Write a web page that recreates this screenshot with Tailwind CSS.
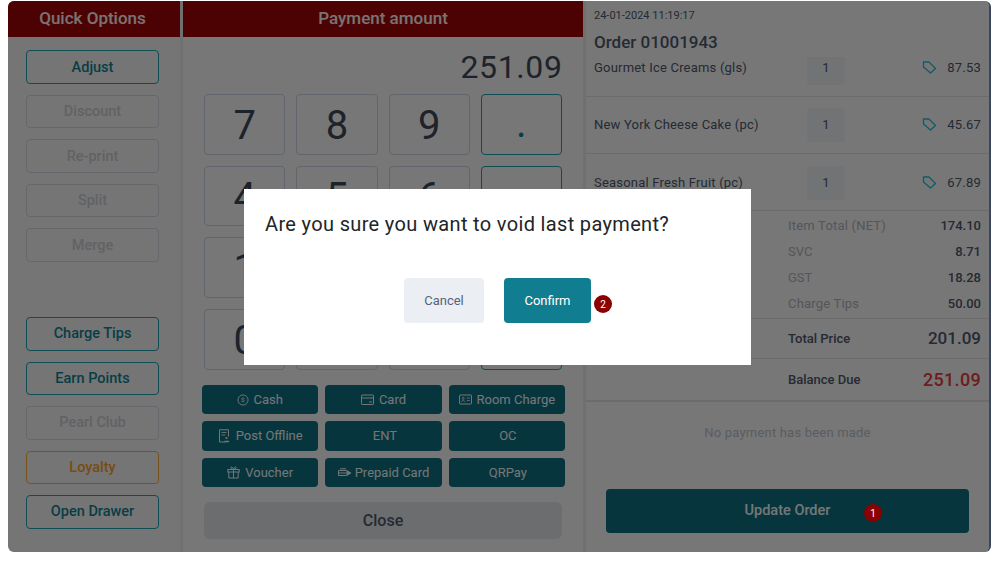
<!DOCTYPE html>
<html lang="en">
<head>
<meta charset="UTF-8" />
<title>Payment</title>
<script src="https://cdn.jsdelivr.net/npm/@tailwindcss/browser@4"></script>
</head>
<body class="bg-white [font-family:Roboto,sans-serif] w-[999px] h-[563px] overflow-hidden">
<div class="relative w-[999px] h-[563px] pt-px pl-2">
	<div class="relative flex w-[983px] h-[551px] overflow-hidden rounded-[6px] bg-[#eeeeee] border-r-2 border-[#3a4660]">
		<!-- quick options -->
		<div class="w-[172px] shrink-0 flex flex-col bg-[#ebebeb]">
			<div class="h-9 pr-[3px] bg-[#980505] text-white/90 font-medium text-[17px] flex items-center justify-center">Quick Options</div>
			<div class="flex flex-col gap-[11px] pt-[13.4px] pl-[18px] pr-[18px] w-[169px] text-[14.5px] font-medium">
				<button class="h-[33.5px] pt-px rounded border border-[#1d9aa8] text-[#0f7c8d]">Adjust</button>
				<button class="h-[33.5px] rounded border border-[#c8d0d8] text-[#c2c5ca]">Discount</button>
				<button class="h-[33.5px] pt-px rounded border border-[#c8d0d8] text-[#c2c5ca]">Re-print</button>
				<button class="h-[33.5px] rounded border border-[#c8d0d8] text-[#c2c5ca]">Split</button>
				<button class="h-[33.5px] pt-px rounded border border-[#c8d0d8] text-[#c2c5ca]">Merge</button>
				<div class="h-[33.5px]"></div>
				<button class="h-[33.5px] rounded border border-[#1d9aa8] text-[#0f7c8d]">Charge Tips</button>
				<button class="h-[33.5px] rounded border border-[#1d9aa8] text-[#0f7c8d]">Earn Points</button>
				<button class="h-[33.5px] rounded border border-[#c8d0d8] text-[#c2c5ca]">Pearl Club</button>
				<button class="h-[33.5px] rounded border border-[#f0a63c] text-[#ee9a26]">Loyalty</button>
				<button class="h-[33.5px] rounded border border-[#1d9aa8] text-[#0f7c8d]">Open Drawer</button>
			</div>
		</div>
		<div class="w-[3px] shrink-0 bg-[#e0e0e0]"></div>
		<!-- payment -->
		<div class="w-[400px] shrink-0 flex flex-col">
			<div class="h-9 bg-[#980505] text-white/90 font-medium text-[17px] flex items-center justify-center">Payment amount</div>
			<div class="h-[57px] pr-[20.5px] pt-[2px] flex items-center justify-end text-[32px] tracking-[0.6px] text-[#3d4757]">251.09</div>
			<div class="ml-[21px] w-[358px] grid grid-cols-4 gap-x-[11px] gap-y-[11px] text-[40px] text-[#3d4757]">
				<button class="h-[60.7px] pt-[3px] rounded border border-[#c0ccd8] leading-none">7</button>
				<button class="h-[60.7px] pt-[3px] rounded border border-[#c0ccd8] leading-none">8</button>
				<button class="h-[60.7px] pt-[3px] rounded border border-[#c0ccd8] leading-none">9</button>
				<button class="h-[60.7px] rounded border border-[#1d9aa8] text-[#0f7c8d] leading-none">.</button>
				<button class="h-[60.7px] pt-[3px] rounded border border-[#c0ccd8] leading-none">4</button>
				<button class="h-[60.7px] pt-[3px] rounded border border-[#c0ccd8] leading-none">5</button>
				<button class="h-[60.7px] pt-[3px] rounded border border-[#c0ccd8] leading-none">6</button>
				<button class="h-[60.7px] rounded border border-[#1d9aa8]"></button>
				<button class="h-[60.7px] pt-[3px] rounded border border-[#c0ccd8] leading-none">1</button>
				<button class="h-[60.7px] pt-[3px] rounded border border-[#c0ccd8] leading-none">2</button>
				<button class="h-[60.7px] pt-[3px] rounded border border-[#c0ccd8] leading-none">3</button>
				<button class="h-[60.7px] rounded border border-[#1d9aa8]"></button>
				<button class="h-[60.7px] pt-[3px] rounded border border-[#c0ccd8] leading-none">0</button>
				<button class="h-[60.7px] pt-[3px] rounded border border-[#c0ccd8] leading-none">00</button>
				<button class="h-[60.7px] pt-[3px] rounded border border-[#c0ccd8] leading-none">000</button>
				<button class="h-[60.7px] rounded border border-[#1d9aa8]"></button>
			</div>
			<div class="ml-[19px] mt-[15px] w-[363px] grid grid-cols-3 gap-x-[7px] gap-y-[7px] text-[13px] text-[#e8eef0]">
				<button class="h-[29.5px] rounded bg-[#0c6a7b] flex items-center justify-center gap-[4px]">
					<svg class="w-[12px] h-[12px]" viewBox="0 0 13 13" fill="none" stroke="currentColor"><circle cx="6.5" cy="6.5" r="5.5"/><path d="M8.2 5c-.4-.8-2.9-1-3.2.2-.3 1.3 3.2.9 3 2.400-.2 1.100-2.900 1-3.300 0" stroke-width=".9"/></svg>
					Cash
				</button>
				<button class="h-[29.5px] rounded bg-[#0c6a7b] flex items-center justify-center gap-[5px]">
					<svg class="w-[13px] h-[13px]" viewBox="0 0 13 13" fill="none" stroke="currentColor"><rect x=".5" y="2" width="12" height="9.5" rx=".6"/><path d="M.5 5h12M8 9h3"/></svg>
					Card
				</button>
				<button class="h-[29.5px] rounded bg-[#0c6a7b] flex items-center justify-center gap-[5px]">
					<svg class="w-[13px] h-[13px]" viewBox="0 0 13 13" fill="none" stroke="currentColor"><rect x=".5" y="2" width="12" height="9" rx=".6"/><circle cx="4.2" cy="5.4" r="1" stroke-width=".8"/><path d="M2.500 9c.2-2 3.200-2 3.400 0M7.800 5h3M7.800 7.500h3" stroke-width=".8"/></svg>
					Room Charge
				</button>
				<button class="h-[29.5px] rounded bg-[#0c6a7b] flex items-center justify-center gap-[5px]">
					<svg class="w-[13px] h-[14px]" viewBox="0 0 13 14" fill="none" stroke="currentColor"><path d="M7 13H1.500V.8h9V7.500"/><path d="M3.500 3.500h5M3.500 6h4" stroke-width=".9"/><circle cx="8.500" cy="9" r="1.100" fill="currentColor" stroke="none"/><path d="M6.500 12.500h4.500" stroke-width="1.500"/></svg>
					Post Offline
				</button>
				<button class="h-[29.5px] pl-[3px] rounded bg-[#0c6a7b]">ENT</button>
				<button class="h-[29.5px] pl-[2px] rounded bg-[#0c6a7b]">OC</button>
				<button class="h-[29.5px] rounded bg-[#0c6a7b] flex items-center justify-center gap-[5px]">
					<svg class="w-[13px] h-[13px]" viewBox="0 0 13 13" fill="none" stroke="currentColor"><rect x=".8" y="3.500" width="11.400" height="2.500"/><path d="M1.800 6v6h9.400V6M6.500 3.500V12M6.500 3.500C4 3.500 3 1 4.500 1s2 2.500 2 2.500 .5-2.500 2-2.500 .5 2.500-2 2.500z"/></svg>
					Voucher
				</button>
				<button class="h-[29.5px] rounded bg-[#0c6a7b] flex items-center justify-center gap-[3px]">
					<svg class="w-[14px] h-[13px]" viewBox="0 0 14 13" fill="none" stroke="currentColor"><path d="M.5 4.500h8l4.500 2.500-4.500 2.500h-8z"/><path d="M9 5l3 2-3 2z" fill="currentColor"/><path d="M.5 7h8M2 2.800h6"/></svg>
					Prepaid Card
				</button>
				<button class="h-[29.5px] pl-[2px] rounded bg-[#0c6a7b]">QRPay</button>
			</div>
			<button class="ml-[21px] mt-[14.5px] w-[358px] h-[37px] pt-px rounded-[6px] bg-[#d8dadd] text-[#4a5568] font-medium text-[16px]">Close</button>
		</div>
		<div class="w-[3px] shrink-0 bg-[#e0e0e0]"></div>
		<!-- order -->
		<div class="flex-1 flex flex-col min-w-0">
			<div class="pl-2 pt-[8px] text-[11px] leading-[13px] text-[#4a5568]">24-01-2024 11:19:17</div>
			<div class="pl-2 mt-[8px] h-[27px] text-[17px] leading-[25px] font-medium text-[#4a5568]">Order 01001943</div>
			<div class="h-[153px] overflow-hidden">
				<div class="-mt-[17.5px] text-[13px] tracking-[0.2px] text-[#4a5568]">
					<div class="h-[57px] border-b border-[#d8d8d8] flex items-center pl-2 pr-[8px]">
						<span class="w-[213px]">Gourmet Ice Creams (gls)</span>
						<span class="w-[38px] h-[34px] rounded bg-[#e4e6ea] flex items-center justify-center">1</span>
						<svg class="ml-[77px] w-[15px] h-[15px] text-[#20b8cc]" viewBox="0 0 15 15" fill="none" stroke="currentColor" stroke-width="1.300"><path d="M1.500 2h5.500l6.500 6.500-5 4.500L1.500 7z" stroke-linejoin="round"/></svg>
						<span class="ml-auto">87.53</span>
					</div>
					<div class="h-[57.500px] border-b border-[#d8d8d8] flex items-center pl-2 pr-[8px]">
						<span class="w-[213px]">New York Cheese Cake (pc)</span>
						<span class="w-[38px] h-[34px] rounded bg-[#e4e6ea] flex items-center justify-center">1</span>
						<svg class="ml-[77px] w-[15px] h-[15px] text-[#20b8cc]" viewBox="0 0 15 15" fill="none" stroke="currentColor" stroke-width="1.300"><path d="M1.500 2h5.500l6.500 6.500-5 4.500L1.500 7z" stroke-linejoin="round"/></svg>
						<span class="ml-auto">45.67</span>
					</div>
					<div class="h-[57.500px] flex items-center pl-2 pr-[8px]">
						<span class="w-[213px]">Seasonal Fresh Fruit (pc)</span>
						<span class="w-[38px] h-[34px] rounded bg-[#e4e6ea] flex items-center justify-center">1</span>
						<svg class="ml-[77px] w-[15px] h-[15px] text-[#20b8cc]" viewBox="0 0 15 15" fill="none" stroke="currentColor" stroke-width="1.300"><path d="M1.500 2h5.500l6.500 6.500-5 4.500L1.500 7z" stroke-linejoin="round"/></svg>
						<span class="ml-auto">67.89</span>
					</div>
				</div>
			</div>
			<div class="pl-[202px] pr-[8px] h-[109px] pt-[2px] border-y border-[#d8d8d8] text-[13px]">
				<div class="flex justify-between h-[26px] items-center"><span class="text-[#a6adb8] tracking-[0.2px]">Item Total (NET)</span><span class="font-medium text-[#4a5568]">174.10</span></div>
				<div class="flex justify-between h-[26px] items-center"><span class="text-[#a6adb8]">SVC</span><span class="font-medium text-[#4a5568]">8.71</span></div>
				<div class="flex justify-between h-[26px] items-center"><span class="text-[#a6adb8]">GST</span><span class="font-medium text-[#4a5568]">18.28</span></div>
				<div class="flex justify-between h-[26px] items-center"><span class="text-[#a6adb8] tracking-[0.2px]">Charge Tips</span><span class="font-medium text-[#4a5568]">50.00</span></div>
			</div>
			<div class="pl-[202px] pr-[8px] h-[40px] border-b border-[#d8d8d8] flex justify-between items-center">
				<span class="font-medium text-[13px] text-[#4a5568]">Total Price</span><span class="font-medium text-[17px] text-[#4a5568]">201.09</span>
			</div>
			<div class="pl-[202px] pr-[8px] h-[43px] border-b-2 border-[#d8d8d8] flex justify-between items-center">
				<span class="font-medium text-[13px] text-[#4a5568]">Balance Due</span><span class="font-medium text-[18px] tracking-[0.3px] text-[#dc3a3a]">251.09</span>
			</div>
			<div class="h-[87px] pb-[26px] flex items-center justify-center text-[13px] tracking-[0.2px] text-[#b4bac4]">No payment has been made</div>
			<div class="mx-5 h-11 rounded bg-[#0c6a7b] text-[#e8eef0] font-medium text-[14.5px] flex items-center justify-center">Update Order</div>
		</div>
		<!-- dim layer -->
		<div class="absolute inset-0 bg-black/50"></div>
	</div>

	<div class="absolute left-[873px] top-[513px] -translate-x-1/2 -translate-y-1/2 w-[18px] h-[18px] rounded-full bg-[#8b0000] text-white text-[10px] flex items-center justify-center">1</div>

	<!-- confirm dialog -->
	<div class="absolute left-[244px] top-[189px] w-[507px] h-[176px] bg-white px-[21px] pt-[22px]">
		<p class="text-[20px] leading-[26px] tracking-[0.34px] text-[#212529]">Are you sure you want to void last payment?</p>
		<div class="mt-[41px] ml-[139px] flex gap-5 items-center text-[13px]">
			<button class="w-[80px] h-[45px] rounded bg-[#ebeff3] text-[#56637a]">Cancel</button>
			<button class="w-[87px] h-[45px] rounded bg-[#117d91] text-white">Confirm</button>
		</div>
		<div class="absolute left-[350px] top-[105px] w-[18px] h-[18px] mt-px rounded-full bg-[#8b0000] text-white text-[10px] flex items-center justify-center">2</div>
	</div>
</div>
</body>
</html>
